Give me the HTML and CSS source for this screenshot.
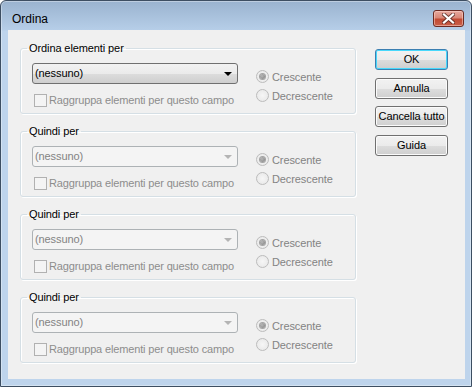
FILE: index.html
```html
<!DOCTYPE html>
<html lang="it">
<head>
<meta charset="utf-8">
<title>Ordina</title>
<link rel="stylesheet" href="styles.css">
</head>
<body>
<div class="window">
  <div class="titlebar">
    <span class="title">Ordina</span>
    <div class="close">
      <svg width="13" height="11" viewBox="0 0 13 11">
        <path d="M2 1.5 L11 9.5 M11 1.5 L2 9.5" stroke="#4f2620" stroke-width="4" stroke-linecap="square" fill="none" opacity="0.75"/>
        <path d="M2 1.5 L11 9.5 M11 1.5 L2 9.5" stroke="#ffffff" stroke-width="2.2" stroke-linecap="square" fill="none"/>
      </svg>
    </div>
  </div>
  <div class="client">
    <div class="groups">
      <fieldset class="group">
        <legend>Ordina elementi per</legend>
        <div class="inner">
          <div class="leftcol">
            <div class="combo"><span>(nessuno)</span><i class="arrow"></i></div>
            <div class="check"><span class="box"></span><span>Raggruppa elementi per questo campo</span></div>
          </div>
          <div class="rightcol">
            <div class="radio"><span class="dot on"></span><span>Crescente</span></div>
            <div class="radio"><span class="dot"></span><span>Decrescente</span></div>
          </div>
        </div>
      </fieldset>
      <fieldset class="group">
        <legend>Quindi per</legend>
        <div class="inner">
          <div class="leftcol">
            <div class="combo disabled"><span>(nessuno)</span><i class="arrow"></i></div>
            <div class="check"><span class="box"></span><span>Raggruppa elementi per questo campo</span></div>
          </div>
          <div class="rightcol">
            <div class="radio"><span class="dot on"></span><span>Crescente</span></div>
            <div class="radio"><span class="dot"></span><span>Decrescente</span></div>
          </div>
        </div>
      </fieldset>
      <fieldset class="group">
        <legend>Quindi per</legend>
        <div class="inner">
          <div class="leftcol">
            <div class="combo disabled"><span>(nessuno)</span><i class="arrow"></i></div>
            <div class="check"><span class="box"></span><span>Raggruppa elementi per questo campo</span></div>
          </div>
          <div class="rightcol">
            <div class="radio"><span class="dot on"></span><span>Crescente</span></div>
            <div class="radio"><span class="dot"></span><span>Decrescente</span></div>
          </div>
        </div>
      </fieldset>
      <fieldset class="group">
        <legend>Quindi per</legend>
        <div class="inner">
          <div class="leftcol">
            <div class="combo disabled"><span>(nessuno)</span><i class="arrow"></i></div>
            <div class="check"><span class="box"></span><span>Raggruppa elementi per questo campo</span></div>
          </div>
          <div class="rightcol">
            <div class="radio"><span class="dot on"></span><span>Crescente</span></div>
            <div class="radio"><span class="dot"></span><span>Decrescente</span></div>
          </div>
        </div>
      </fieldset>
    </div>
    <div class="buttons">
      <div class="btn default">OK</div>
      <div class="btn">Annulla</div>
      <div class="btn">Cancella tutto</div>
      <div class="btn">Guida</div>
    </div>
  </div>
</div>
</body>
</html>
```
FILE: styles.css
```css
* { box-sizing: border-box; }
html, body { margin: 0; padding: 0; background: #ffffff; }
body { font-family: "Liberation Sans", Arial, sans-serif; font-size: 11px; color: #000; letter-spacing: -0.1px; }

.window {
  width: 472px;
  height: 387px;
  border: 1px solid #3d4e62;
  border-radius: 6px 6px 0 0;
  background: linear-gradient(to bottom, #9ab3cf 0px, #b6cee8 29px, #bed4ec 30px, #bed4ec 100%);
  padding: 0 6px 7px 7px;
  display: flex;
  flex-direction: column;
  box-shadow: inset 0 0 0 1px rgba(255,255,255,0.35);
}

.titlebar {
  height: 29px;
  display: flex;
  align-items: flex-start;
}
.title {
  font-size: 12px;
  line-height: 16px;
  margin-top: 10px;
  margin-left: 4px;
  color: #000;
  letter-spacing: 0;
}
.close {
  margin-left: auto;
  margin-top: 9px;
  margin-right: 1px;
  width: 31px;
  height: 17px;
  border: 1px solid #6b2b23;
  border-radius: 3px;
  background: linear-gradient(to bottom, #e7a99f 0%, #d98878 45%, #c24a33 55%, #c9604a 100%);
  box-shadow: inset 0 0 0 1px rgba(255,220,210,0.5);
  display: flex;
  align-items: center;
  justify-content: center;
}
.close svg { display: block; }

.client {
  flex: 1;
  background: #f0f0f0;
  display: flex;
  padding: 12px 0 0 12px;
}

.groups { width: 336px; display: flex; flex-direction: column; flex: none; }

.group {
  margin: 0 0 11px 0;
  padding: 0;
  border: 1px solid #d5dfe5;
  border-radius: 3px;
  width: 336px;
  box-shadow: inset 1px 1px 0 #ffffff, 1px 1px 0 #ffffff;
}
.group legend {
  margin-left: 6px;
  padding: 0 2px;
  font-size: 11px;
  line-height: 13px;
}

.inner {
  display: flex;
  padding: 8px 0 6px 11px;
}
.leftcol { width: 206px; flex: none; }

.combo {
  height: 21px;
  border: 1px solid #707070;
  border-radius: 3px;
  background: linear-gradient(to bottom, #f2f2f2 0%, #ebebeb 50%, #dddddd 51%, #cfcfcf 100%);
  display: flex;
  align-items: center;
  padding-left: 2px;
  line-height: 13px;
}
.combo .arrow {
  margin-left: auto;
  margin-right: 5px;
  width: 0; height: 0;
  border-left: 4px solid transparent;
  border-right: 4px solid transparent;
  border-top: 4px solid #000;
}
.combo.disabled {
  border-color: #adb2b5;
  background: #f4f4f4;
  color: #838383;
}
.combo.disabled .arrow { border-top-color: #b4b4b4; }

.check {
  margin-top: 10px;
  padding-left: 2px;
  display: flex;
  align-items: center;
  height: 13px;
  color: #8d8d8d;
  line-height: 13px;
  white-space: nowrap;
  letter-spacing: -0.15px;
}
.check .box {
  width: 13px; height: 13px;
  border: 1px solid #b1b1b1;
  background: #f4f4f4;
  margin-right: 2px;
  flex: none;
}

.rightcol {
  margin-left: 18px;
  padding-top: 4px;
}
.radio {
  height: 19px;
  display: flex;
  align-items: center;
  color: #838383;
}
.radio .dot {
  width: 13px; height: 13px;
  border-radius: 50%;
  border: 1px solid #bcbcbc;
  background: radial-gradient(circle, #f6f6f6 0%, #e6e6e6 100%);
  margin-right: 3px;
  display: flex;
  align-items: center;
  justify-content: center;
  flex: none;
}
.radio .dot.on::after {
  content: "";
  width: 5px; height: 5px;
  border-radius: 50%;
  background: radial-gradient(circle at 40% 40%, #b8b8b8 0%, #7d7d7d 100%);
  box-shadow: 0 0 0 1px #a3a3a3;
}

.buttons {
  margin-left: 19px;
  padding-top: 7px;
  display: flex;
  flex-direction: column;
  gap: 7.6px;
}
.btn {
  width: 73px;
  height: 21px;
  border: 1px solid #707070;
  border-radius: 3px;
  background: linear-gradient(to bottom, #f2f2f2 0%, #ebebeb 50%, #dddddd 51%, #cfcfcf 100%);
  box-shadow: inset 0 0 0 1px #fbfbfb;
  display: flex;
  align-items: center;
  justify-content: center;
  line-height: 13px;
  white-space: nowrap;
}
.btn.default {
  border-color: #3c7fb1;
  box-shadow: inset 0 0 0 1px #48d8fb;
}
```
